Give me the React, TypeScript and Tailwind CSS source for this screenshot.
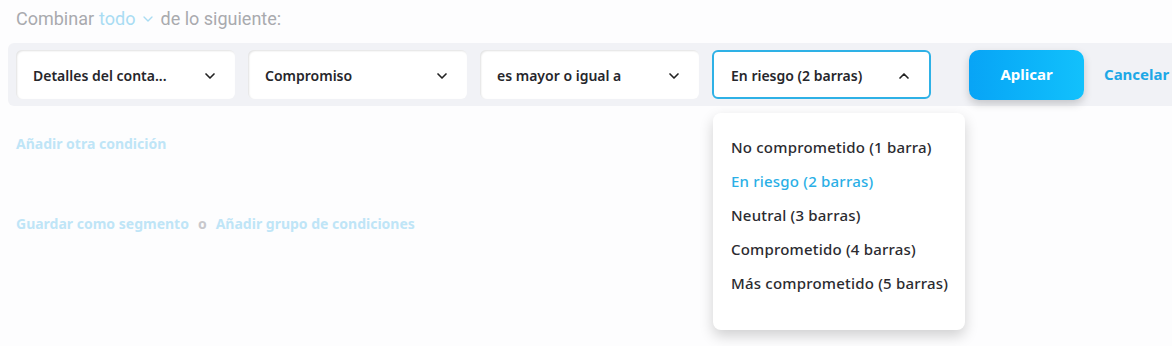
import { ChevronDown, ChevronUp } from "lucide-react";

const font = { fontFamily: '"Noto Sans", "Open Sans", sans-serif' };

function Select({ label, open = false }: { label: string; open?: boolean }) {
  return (
    <div
      className={`flex h-[49px] w-[219px] items-center justify-between rounded-md bg-white pl-[17px] pr-[17px] pt-[2px] ${
        open
          ? "border-2 border-[#2eb1e6] pl-[16px]"
          : "shadow-[inset_1px_1px_2px_rgba(0,0,0,0.12)]"
      }`}
    >
      <span className="text-[14px] font-semibold text-[#26262b]">{label}</span>
      {open ? (
        <ChevronUp className="h-4 w-4 text-[#222]" strokeWidth={2.5} />
      ) : (
        <ChevronDown className="h-4 w-4 text-[#222]" strokeWidth={2.5} />
      )}
    </div>
  );
}

const options = [
  "No comprometido (1 barra)",
  "En riesgo (2 barras)",
  "Neutral (3 barras)",
  "Comprometido (4 barras)",
  "Más comprometido (5 barras)",
];

export default function App() {
  return (
    <div className="relative h-[346px] w-[1172px] overflow-hidden bg-[#fdfdfe]" style={font}>
      <div
        className="flex h-[36px] items-center gap-[5px] pl-4 pt-[1px] text-[18px] leading-none text-[#a9aaae]"
        style={{ fontFamily: "Roboto, sans-serif" }}
      >
        <span>Combinar</span>
        <span className="flex items-center text-[#a9dcf3]">
          todo
          <ChevronDown className="ml-1 h-4 w-4" strokeWidth={2} />
        </span>
        <span>de lo siguiente:</span>
      </div>

      <div className="ml-2 mt-[7px] flex h-[63px] items-center rounded-l-md bg-[#f1f2f6] pl-2">
        <div className="flex gap-[13px]">
          <Select label="Detalles del conta..." />
          <Select label="Compromiso" />
          <Select label="es mayor o igual a" />
          <Select label="En riesgo (2 barras)" open />
        </div>
        <button className="ml-[38px] h-[50px] w-[115px] rounded-[10px] bg-gradient-to-r from-[#08a4f6] to-[#12c1fc] text-[15px] font-bold text-white shadow-[0_4px_8px_rgba(0,0,0,0.18)]">
          Aplicar
        </button>
        <button className="ml-5 text-[15px] font-bold text-[#1ea8e6]">Cancelar</button>
      </div>

      <div className="pl-4 pt-[27px] text-[14px] font-bold text-[#bfe5f7]">Añadir otra condición</div>

      <div className="flex items-center gap-[9px] pl-4 pt-[59px] text-[14px] font-bold text-[#bfe5f7]">
        <span>Guardar como segmento</span>
        <span className="text-[#c8c8cc]">o</span>
        <span>Añadir grupo de condiciones</span>
      </div>

      <div className="absolute left-[713px] top-[113px] w-[252px] rounded-lg bg-white pb-[30px] pt-[17px] shadow-[0_6px_14px_rgba(0,0,0,0.18)]">
        {options.map((o, i) => (
          <div
            key={o}
            className={`pl-[18px] text-[15px] font-medium leading-[34px] tracking-[0.2px] ${
              i === 1 ? "text-[#2aafe6]" : "text-[#2b2b30]"
            }`}
          >
            {o}
          </div>
        ))}
      </div>
    </div>
  );
}
